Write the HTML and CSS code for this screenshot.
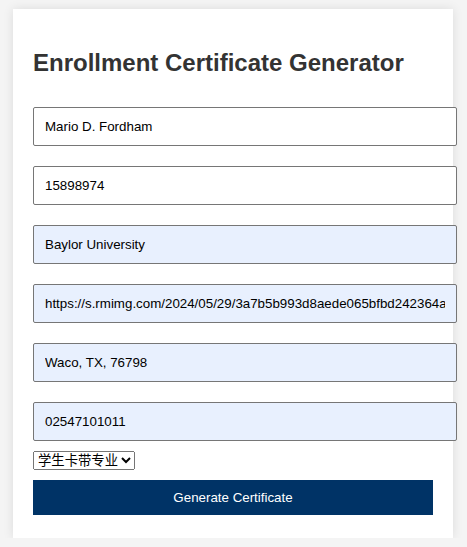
FILE: index.html
```html
<!DOCTYPE html>
<html>
<head>
<meta charset="utf-8">
<link rel="stylesheet" href="styles.css">
</head>
<body>
<div class="container">
  <h2 class="title">Enrollment Certificate Generator</h2>
  <div class="fields">
    <input class="field" type="text" value="Mario D. Fordham">
    <input class="field" type="text" value="15898974">
    <input class="field filled" type="text" value="Baylor University">
    <input class="field filled" type="text" value="https://s.rmimg.com/2024/05/29/3a7b5b993d8aede065bfbd242364a1b2.png">
    <input class="field filled" type="text" value="Waco, TX, 76798">
    <input class="field filled" type="text" value="02547101011">
  </div>
  <select class="kind">
    <option>学生卡带专业</option>
  </select>
  <button class="generate">Generate Certificate</button>
</div>
</body>
</html>
```
FILE: styles.css
```css
html, body {
  margin: 0;
  padding: 0;
}
body {
  background: #f4f4f4;
  font-family: "Liberation Sans", Arial, sans-serif;
  padding: 9px 1px 0 0;
}
.container {
  width: 400px;
  margin: 0 auto;
  background: #fff;
  padding: 20px 20px 23px;
  box-shadow: 0 0 10px rgba(0, 0, 0, 0.1);
}
.title {
  font-size: 24px;
  color: #333;
  margin: 20px 0 20px;
}
.fields {
  display: flex;
  flex-direction: column;
  gap: 20px;
  padding-top: 10px;
}
.field {
  display: block;
  width: 400px;
  padding: 10px 11px;
  line-height: 17px;
  font-size: 13.33px;
  font-family: "Liberation Sans", Arial, sans-serif;
  border: 1px solid #767676;
  border-radius: 2px;
  background: #fff;
  color: #000;
  outline: none;
}
.field.filled {
  background: #e8f0fe;
}
.kind {
  display: block;
  margin-top: 10px;
  font-family: "Liberation Sans", "Noto Sans CJK SC", sans-serif;
  font-size: 13.33px;
}
.generate {
  display: block;
  width: 400px;
  margin-top: 10px;
  padding: 9px 0;
  line-height: 17px;
  font-size: 13.33px;
  font-family: "Liberation Sans", Arial, sans-serif;
  background: #003366;
  color: #fff;
  border: none;
}
```
